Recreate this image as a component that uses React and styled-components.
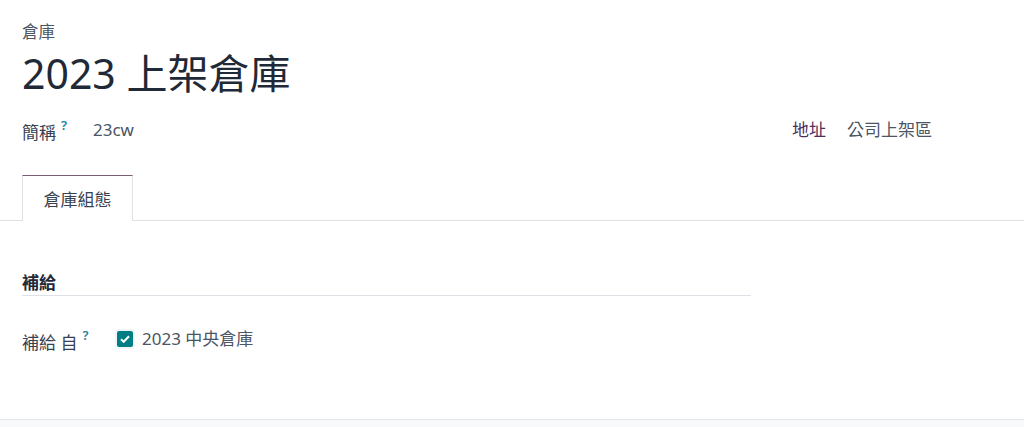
import React from "react";
import styled, { createGlobalStyle } from "styled-components";

const Global = createGlobalStyle`
  html, body { margin: 0; padding: 0; }
  body {
    background: #f8f9fa;
    font-family: "Noto Sans", "Noto Sans CJK TC", sans-serif;
    color: #374151;
  }
`;

const Sheet = styled.div`
  background: #fff;
  height: 420px;
  border-bottom: 1px solid #e2e5e9;
  box-sizing: border-box;
  display: flex;
  flex-direction: column;
`;

const Header = styled.div`
  padding: 22px 22px 0;
`;

const Crumb = styled.div`
  font-size: 16.5px;
  line-height: 20px;
  color: #4b5563;
`;

const Title = styled.h1`
  margin: 7px 0 0;
  font-size: 41px;
  line-height: 48px;
  font-weight: 400;
  color: #1f2937;
`;

const FieldRow = styled.div`
  display: flex;
  justify-content: space-between;
  align-items: center;
  margin-top: 18px;
  padding-right: 70px;
  line-height: 24px;
  font-size: 17px;
`;

const Field = styled.div`
  display: flex;
  align-items: center;
`;

const Label = styled.span`
  width: ${(p) => p.$w}px;
  color: ${(p) => p.$color || "#374151"};
  flex-shrink: 0;
`;

const Help = styled.sup`
  color: #1b7fa3;
  font-size: 13px;
  font-weight: 600;
  margin-left: 5px;
  position: relative;
  top: -2px;
`;

const Value = styled.span`
  color: #4b5563;
`;

const TabNav = styled.div`
  margin-top: 30px;
  padding-left: 22px;
  border-bottom: 1px solid #dee2e6;
  display: flex;
`;

const Tab = styled.div`
  width: 111px;
  height: 46px;
  box-sizing: border-box;
  border: 1px solid #dee2e6;
  border-top-color: #7a5d76;
  border-bottom: none;
  background: #fff;
  margin-bottom: -1px;
  display: flex;
  align-items: center;
  justify-content: center;
  font-size: 17px;
  color: #374151;
`;

const Panel = styled.div`
  padding: 50px 22px 0;
`;

const Section = styled.div`
  width: 729px;
  font-size: 17px;
  line-height: 24px;
  font-weight: 700;
  color: #1f2937;
  border-bottom: 1px solid #dee2e6;
`;

const CheckRow = styled.div`
  display: flex;
  align-items: center;
  margin-top: 29px;
  line-height: 24px;
  font-size: 17px;
`;

const Box = styled.span`
  width: 16px;
  height: 16px;
  border-radius: 2px;
  background: #017e84;
  display: inline-flex;
  align-items: center;
  justify-content: center;
  margin-right: 9px;
  box-shadow: 0 0 0 2px #eef6f6;
`;

export default function App() {
  return (
    <>
      <Global />
      <Sheet>
        <Header>
          <Crumb>倉庫</Crumb>
          <Title>2023 上架倉庫</Title>
          <FieldRow>
            <Field>
              <Label $w={71}>
                簡稱<Help>?</Help>
              </Label>
              <Value>23cw</Value>
            </Field>
            <Field>
              <Label $w={55} $color="#4e2d5c">地址</Label>
              <Value>公司上架區</Value>
            </Field>
          </FieldRow>
        </Header>
        <TabNav>
          <Tab>倉庫組態</Tab>
        </TabNav>
        <Panel>
          <Section>補給</Section>
          <CheckRow>
            <Label $w={95}>
              補給 自<Help>?</Help>
            </Label>
            <Box>
              <svg width="10" height="8" viewBox="0 0 10 8">
                <path d="M1 4.2 L3.7 6.8 L9 1.3" fill="none" stroke="#fff" strokeWidth="2" />
              </svg>
            </Box>
            <Value>2023 中央倉庫</Value>
          </CheckRow>
        </Panel>
      </Sheet>
    </>
  );
}
